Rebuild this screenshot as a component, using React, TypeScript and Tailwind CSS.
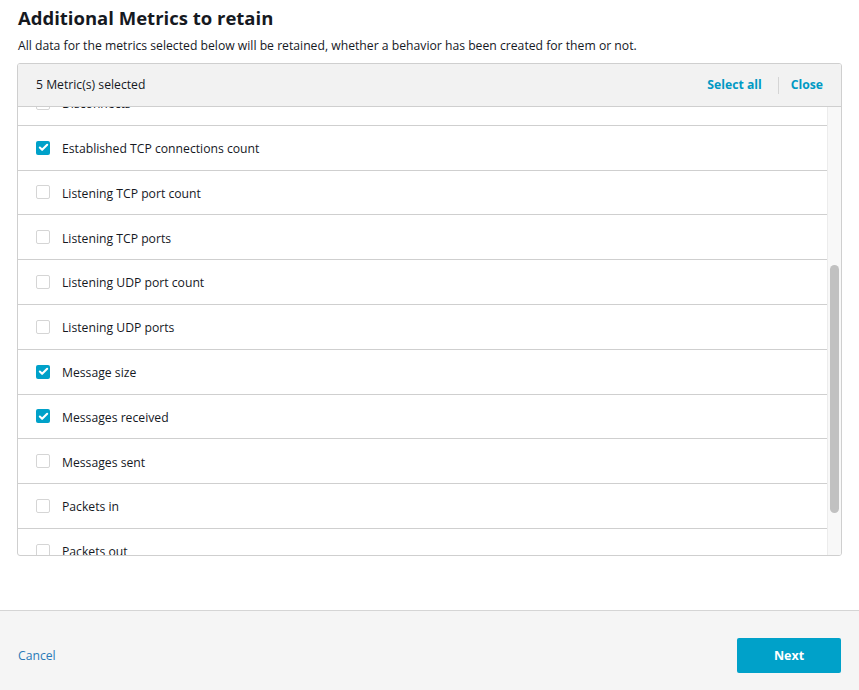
import { Check } from 'lucide-react';

type Metric = { name: string; checked: boolean };

const metrics: Metric[] = [
  { name: 'Disconnects', checked: false },
  { name: 'Established TCP connections count', checked: true },
  { name: 'Listening TCP port count', checked: false },
  { name: 'Listening TCP ports', checked: false },
  { name: 'Listening UDP port count', checked: false },
  { name: 'Listening UDP ports', checked: false },
  { name: 'Message size', checked: true },
  { name: 'Messages received', checked: true },
  { name: 'Messages sent', checked: false },
  { name: 'Packets in', checked: false },
  { name: 'Packets out', checked: false },
  { name: 'Source IP', checked: false },
];

function Checkbox({ checked }: { checked: boolean }) {
  if (checked) {
    return (
      <span className="flex h-[14px] w-[14px] shrink-0 items-center justify-center rounded-[2px] bg-[#00a1c9]">
        <Check size={11} strokeWidth={4.5} className="text-white" />
      </span>
    );
  }
  return <span className="h-[14px] w-[14px] shrink-0 rounded-[2px] border border-[#d5d5d5] bg-white" />;
}

export default function App() {
  return (
    <div className="flex h-[690px] w-[859px] flex-col bg-white font-['Open_Sans',sans-serif] text-[#16191f]">
      {/* Body */}
      <div className="flex-1 px-[17px] pt-[5px]">
        <h2 className="pl-px text-[18.5px] font-bold leading-[26px] text-[#16191f]">Additional Metrics to retain</h2>
        <p className="mt-[7px] pl-px text-[12.2px] leading-[16px] text-[#16191f]">
          All data for the metrics selected below will be retained, whether a behavior has been created for them or not.
        </p>

        {/* Panel */}
        <div className="mt-[9px] flex h-[493px] flex-col overflow-hidden rounded-[3px] border border-[#cfcfcf]">
          <div className="flex h-[43px] shrink-0 items-center justify-between border-b border-[#cfcfcf] bg-[#f2f2f2] pl-[18px] pr-[18px]">
            <span className="pt-px text-[12.2px]">5 Metric(s) selected</span>
            <div className="flex items-center pt-px text-[12.2px] font-bold text-[#0099c4]">
              <span>Select all</span>
              <span className="ml-[16px] mr-[12px] h-[17px] w-px bg-[#d5d5d5]" />
              <span>Close</span>
            </div>
          </div>

          <div className="flex min-h-0 flex-1">
            <div className="min-w-0 flex-1 overflow-hidden">
              <ul className="-mt-[26px]">
                {metrics.map((m) => (
                  <li
                    key={m.name}
                    className="flex h-[44.8px] items-center gap-[12px] border-b border-[#cfcfcf] pl-[18px] text-[12.2px]"
                  >
                    <Checkbox checked={m.checked} />
                    <span className="pt-[3px]">{m.name}</span>
                  </li>
                ))}
              </ul>
            </div>
            {/* Scrollbar */}
            <div className="flex w-[14px] shrink-0 flex-col border-l border-[#ececec] bg-[#f8f8f8] px-[2px] pt-[158px]">
              <div className="h-[248px] rounded-full bg-[#c1c1c1]" />
            </div>
          </div>
        </div>
      </div>

      {/* Footer */}
      <div className="flex h-[80px] shrink-0 items-start justify-between border-t border-[#d5d5d5] bg-[#f5f5f5] pl-[18px] pr-[18px] pt-[27px]">
        <span className="mt-[9px] text-[12.2px] text-[#2a7ab8]">Cancel</span>
        <button className="h-[35px] w-[104px] rounded-[2px] bg-[#00a1c9] pt-px text-[12.5px] font-bold text-white">
          Next
        </button>
      </div>
    </div>
  );
}
